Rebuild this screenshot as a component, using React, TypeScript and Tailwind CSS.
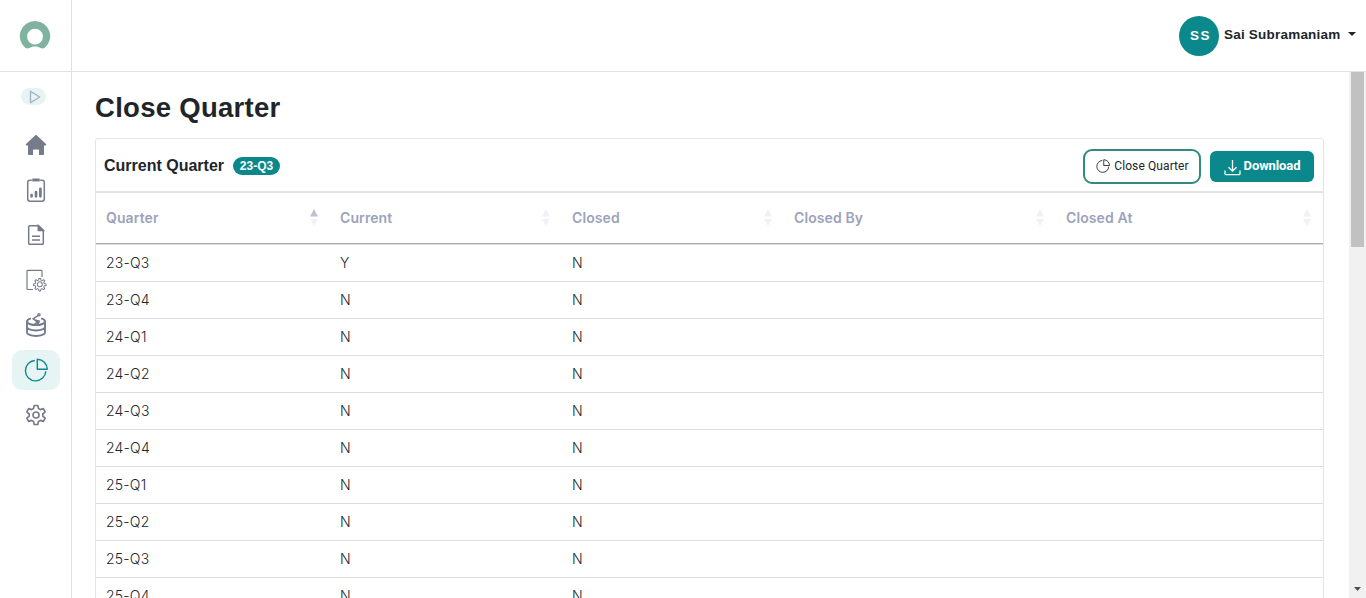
import type { ReactNode } from "react";

const quarters = ["23-Q3", "23-Q4", "24-Q1", "24-Q2", "24-Q3", "24-Q4", "25-Q1", "25-Q2", "25-Q3", "25-Q4"];

const columns = [
  { label: "Quarter", width: "w-[234px]", sorted: true },
  { label: "Current", width: "w-[232px]", sorted: false },
  { label: "Closed", width: "w-[222px]", sorted: false },
  { label: "Closed By", width: "w-[272px]", sorted: false },
  { label: "Closed At", width: "w-[267px]", sorted: false },
];

function Logo() {
  return (
    <svg width="32" height="30" viewBox="0 0 32 30">
      <path
        fill="#80b39f"
        fillRule="evenodd"
        d="M16 0A15.200 15.200 0 0 0 6.200 26.800c1.200 1 2.900 1 4.200.3 1.500-.9 3-1.600 5.600-1.600s4.100.7 5.600 1.600c1.300.7 3 .7 4.200-.3A15.200 15.200 0 0 0 16 0zm0 7.800a7.900 7.900 0 1 1 0 15.800a7.900 7.900 0 0 1 0-15.800z"
      />
    </svg>
  );
}

function HomeIcon() {
  return (
    <svg width="22" height="22" viewBox="0 0 22 22" fill="#747b8a">
      <path d="M10.300 1.300 1 10c-.6.600-.3 1.400.6 1.400H3v8.600c0 .6.400 1 1 1h4v-4.500c0-.6.400-1 1-1h4c.6 0 1 .4 1 1V21h4c.6 0 1-.4 1-1v-8.600h1.400c.9 0 1.200-.8.600-1.400l-9.300-8.700c-.4-.4-1-.4-1.400 0z" />
    </svg>
  );
}

function ReportIcon() {
  return (
    <svg width="20" height="26" viewBox="0 0 20 26" fill="none" stroke="#747b8a">
      <rect x="1.700" y="3.200" width="16.600" height="21" rx="2.200" strokeWidth="1.500" />
      <path d="M6 4V2.500C6 1.700 6.500 1.200 7.300 1.200h5.400c.8 0 1.300.5 1.300 1.300V4c0 .4-.3.700-.7.700H6.700A.7.700 0 0 1 6 4z" fill="#747b8a" stroke="#fff" strokeWidth=".5" />
      <path d="M5.600 19.300v-1.200M10 19.300v-4.300M14.400 19.300v-7.500" strokeWidth="2.700" strokeLinecap="round" />
    </svg>
  );
}

function FileIcon() {
  return (
    <svg width="18" height="22" viewBox="0 0 18 22" fill="none" stroke="#747b8a" strokeWidth="1.500">
      <path d="M11.500 1.700H2.800c-.7 0-1.100.4-1.100 1.100v16.400c0 .7.400 1.100 1.100 1.100h12.400c.7 0 1.100-.4 1.100-1.100V6.300z" />
      <path d="M11.300 1.700v4.800h5z" fill="#747b8a" />
      <path d="M5 12.200h8M5 16h8" />
    </svg>
  );
}

const GEAR_OUTLINE =
  "M9.700 1.500h2.600l.7 3 1.900.8 2.600-1.600 1.900 1.900-1.600 2.600.8 1.900 3 .7v2.600l-3 .7-.8 1.900 1.600 2.600-1.900 1.900-2.600-1.600-1.900.8-.7 3H9.700l-.7-3-1.900-.8-2.600 1.600-1.900-1.900 1.600-2.600-.8-1.900-3-.7v-2.600l3-.7.8-1.900-1.600-2.600 1.900-1.900 2.600 1.600 1.900-.8z";

function FileGearIcon() {
  return (
    <svg width="22" height="24" viewBox="0 0 22 24" fill="none" stroke="#747b8a">
      <path d="M8 21.500H2.700a.7.700 0 0 1-.7-.7V3a.7.700 0 0 1 .7-.700h13.600c.4 0 .7.300.7.700v6" strokeWidth="1.200" />
      <g transform="translate(8.300 9.500) scale(.59)" strokeWidth="1.700" strokeLinejoin="round">
        <path d={GEAR_OUTLINE} />
        <circle cx="11" cy="11.500" r="4.200" />
      </g>
    </svg>
  );
}

function DatabaseIcon() {
  return (
    <svg width="22" height="26" viewBox="0 0 22 26" fill="none" stroke="#747b8a" strokeWidth="1.900">
      <path d="M6 6.300C3.600 6.900 2 7.900 2 9.400c0 2 4 3.700 9 3.700s9-1.700 9-3.700c0-1.300-1.500-2.400-3.800-3" />
      <path d="M2 9.200v11.200c0 2 4 3.600 9 3.600s9-1.600 9-3.600V9.200M2 14.900c0 2 4 3.600 9 3.600s9-1.600 9-3.600" />
      <path d="M8.500 13 12.800 10.300 8.300 6.700 13 3.700M10 8l4.300 1.200-1.600 3" strokeWidth="1.600" />
      <circle cx="14" cy="2.800" r="1.100" strokeWidth="1.300" fill="#fff" />
    </svg>
  );
}

function PieIcon({ size, stroke, color }: { size: number; stroke: number; color: string }) {
  return (
    <svg width={size} height={size} viewBox="0 0 24 24" fill="none" stroke={color} strokeWidth={stroke}>
      <path d="M10.800 2.500A10.200 10.200 0 1 0 21.800 13.200" />
      <path d="M13.300 1.200V11.200h10C23 5.500 19 1.500 13.300 1.200z" strokeLinejoin="round" />
    </svg>
  );
}

function SettingsIcon() {
  return (
    <svg width="22" height="22" viewBox="0 0 24 24" fill="none" stroke="#747b8a" strokeWidth="1.800" strokeLinejoin="round">
      <path d="M10 1.600h4l.7 3.400 2 1.150 3.300-1.100 2 3.450-2.600 2.350v2.300l2.600 2.350-2 3.450-3.300-1.100-2 1.150-.7 3.400h-4L9.300 19l-2-1.150L4 18.950 2 15.500l2.600-2.350v-2.300L2 8.500l2-3.450 3.300 1.100L9.300 5z" />
      <circle cx="12" cy="12" r="3.300" />
    </svg>
  );
}

function NavItem({ children, active = false }: { children: ReactNode; active?: boolean }) {
  return (
    <a className={`flex h-10 w-12 items-center justify-center rounded-[10px] ${active ? "bg-[#e6f4f3] pb-px pl-px" : ""}`}>
      {children}
    </a>
  );
}

function SortArrows({ sorted }: { sorted: boolean }) {
  return (
    <svg width="8" height="17" viewBox="0 0 8 17">
      <path d="M4 0 8 7.500H0z" fill={sorted ? "#bcc1d3" : "#f0f1f6"} />
      <path d="M0 10h8l-4 7z" fill="#f0f1f6" />
    </svg>
  );
}

export default function App() {
  return (
    <div className="flex h-[598px] w-[1366px] flex-col overflow-hidden bg-white font-['Liberation_Sans',sans-serif] text-[#212529]">
      <header className="flex h-[72px] shrink-0 border-b border-[#dee0e2]">
        <div className="flex w-[72px] items-center justify-center border-r border-[#dee0e2] pr-0.5">
          <Logo />
        </div>
        <div className="flex flex-1 items-center justify-end pr-[10px]">
          <div className="flex size-10 items-center justify-center rounded-full bg-[#0b888c] pt-px pl-[3px] text-[13.5px] font-bold tracking-[1.5px] text-white">
            SS
          </div>
          <span className="-mt-px ml-[5px] w-[124px] text-[13.5px] leading-5 font-bold tracking-[0.21px] whitespace-nowrap">
            Sai Subramaniam
          </span>
          <svg width="8" height="4" viewBox="0 0 8 4" className="-mt-1">
            <path d="M0 0h8L4 4z" fill="#212529" />
          </svg>
        </div>
      </header>

      <div className="flex min-h-0 flex-1">
        <nav className="flex w-[72px] shrink-0 flex-col items-center border-r border-[#dee0e2] pt-4">
          <div className="mr-[5px] mb-[20px] flex h-[17px] w-[25px] items-center justify-center rounded-full bg-[#e6f4f3] pl-[3px]">
            <svg width="12" height="14" viewBox="0 0 12 14" fill="none" stroke="#a3b1c2" strokeWidth="1.300">
              <path d="M1.500 1.200v11.600L10.700 7z" strokeLinejoin="round" />
            </svg>
          </div>
          <div className="flex flex-col gap-[5px]">
            <NavItem><HomeIcon /></NavItem>
            <NavItem><ReportIcon /></NavItem>
            <NavItem><FileIcon /></NavItem>
            <NavItem><FileGearIcon /></NavItem>
            <NavItem><DatabaseIcon /></NavItem>
            <NavItem active><PieIcon size={24} stroke={1.4} color="#0b888c" /></NavItem>
            <NavItem><SettingsIcon /></NavItem>
          </div>
        </nav>

        <main className="min-w-0 flex-1 overflow-hidden pt-[19px] pr-[25px] pl-[23px]">
          <h1 className="h-[47px] text-[27.5px] leading-[34px] font-bold tracking-[0.28px]">Close Quarter</h1>
          <section className="rounded-t-[3px] border border-[#e3e5e8]">
            <div className="flex h-[53px] items-center border-b border-[#e3e5e8] pt-0.5 pr-[9px] pl-2">
              <h2 className="w-[129px] text-[16px] font-bold whitespace-nowrap">Current Quarter</h2>
              <span className="flex h-[18px] w-[47px] items-center justify-center rounded-full bg-[#0b888c] text-[12px] font-bold text-white">
                23-Q3
              </span>
              <button className="mt-px ml-auto flex h-[35px] w-[118px] items-center justify-center gap-1 rounded-[9px] border-2 border-[#32897e] pb-0.5 pl-px font-[Roboto,sans-serif] text-[12px] tracking-[0.1px]">
                <PieIcon size={14} stroke={1.5} color="#212529" />
                Close Quarter
              </button>
              <button className="ml-[9px] flex h-[31px] w-[104px] items-center justify-center gap-[3px] rounded-[6px] bg-[#0b888c] font-[Roboto,sans-serif] text-[13px] font-bold tracking-[-0.1px] text-white">
                <svg width="17" height="17" viewBox="0 0 17 17" fill="none" stroke="currentColor" strokeWidth="1.300" className="mt-0.5">
                  <path d="M1 11.500v3.300c0 .6.300.9.900.9h13.200c.6 0 .9-.3.900-.9v-3.300M8.500 1v11M4.500 8.200l4 4 4-4" />
                </svg>
                Download
              </button>
            </div>
            <table className="w-[1227px] table-fixed border-separate border-spacing-0 font-[Inter,sans-serif] text-[14px]">
              <thead>
                <tr className="h-[52px]">
                  {columns.map((c) => (
                    <th
                      key={c.label}
                      className={`${c.width} border-t border-b border-t-[#dee2e6] border-b-[#a9adb3] p-0 pr-[12px] pb-px pl-[10px] font-semibold text-[#9ca3b9]`}
                    >
                      <div className="flex items-center justify-between tracking-[0.1px]">
                        <span>{c.label}</span>
                        <SortArrows sorted={c.sorted} />
                      </div>
                    </th>
                  ))}
                </tr>
              </thead>
              <tbody>
                {quarters.map((q, i) => (
                  <tr
                    key={q}
                    className={`${i === 0 ? "h-[38px] [&>td]:border-t" : "h-[37px]"} [&>td]:border-b [&>td]:border-[#dcdddf] [&>td]:p-0 [&>td]:pb-px [&>td]:pl-[10px] [&>td]:font-[350]`}
                  >
                    <td className="tracking-[0.2px]">{q}</td>
                    <td>{i === 0 ? "Y" : "N"}</td>
                    <td>N</td>
                    <td />
                    <td />
                  </tr>
                ))}
              </tbody>
            </table>
          </section>
        </main>

        <div className="flex w-[17px] shrink-0 flex-col items-center justify-between bg-[#f1f1f1] pb-[7px]">
          <div className="h-[175px] w-[13px] bg-[#c1c1c1]" />
          <svg width="7" height="4" viewBox="0 0 7 4">
            <path d="M0 0h7L3.500 4z" fill="#505050" />
          </svg>
        </div>
      </div>
    </div>
  );
}
